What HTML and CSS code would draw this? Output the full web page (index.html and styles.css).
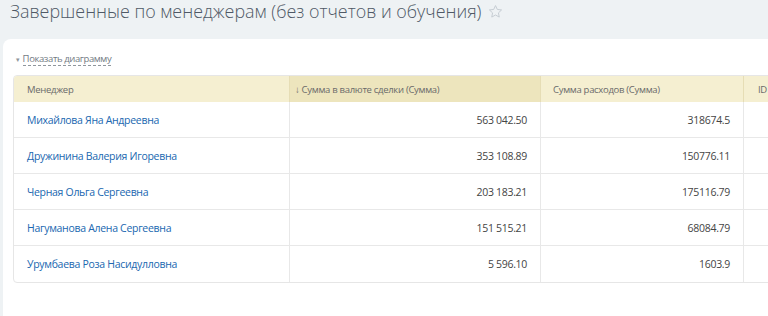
FILE: index.html
```html
<!DOCTYPE html>
<html lang="ru">
<head>
<meta charset="utf-8">
<link rel="stylesheet" href="styles.css">
</head>
<body>
<div class="page">
  <div class="title-row">
    <h1 class="title">Завершенные по менеджерам (без отчетов и обучения)</h1>
    <svg class="star" width="15" height="15" viewBox="0 0 24 24"><path d="M12 2.5l2.9 6.2 6.8.8-5 4.7 1.3 6.7L12 17.6 6 20.9l1.3-6.7-5-4.7 6.8-.8z" fill="none" stroke="#c6cdd3" stroke-width="1.6" stroke-linejoin="round"/></svg>
  </div>
  <div class="card">
    <div class="toggle"><span class="caret">▾</span><span class="toggle-link">Показать диаграмму</span></div>
    <div class="table">
      <div class="row head">
        <div class="cell c1">Менеджер</div>
        <div class="cell c2 sorted">↓ Сумма в валюте сделки (Сумма)</div>
        <div class="cell c3">Сумма расходов (Сумма)</div>
        <div class="cell c4">ID</div>
      </div>
      <div class="row">
        <div class="cell c1"><a class="name">Михайлова Яна Андреевна</a></div>
        <div class="cell c2 num">563 042.50</div>
        <div class="cell c3 num">318674.5</div>
        <div class="cell c4"></div>
      </div>
      <div class="row">
        <div class="cell c1"><a class="name">Дружинина Валерия Игоревна</a></div>
        <div class="cell c2 num">353 108.89</div>
        <div class="cell c3 num">150776.11</div>
        <div class="cell c4"></div>
      </div>
      <div class="row">
        <div class="cell c1"><a class="name">Черная Ольга Сергеевна</a></div>
        <div class="cell c2 num">203 183.21</div>
        <div class="cell c3 num">175116.79</div>
        <div class="cell c4"></div>
      </div>
      <div class="row">
        <div class="cell c1"><a class="name">Нагуманова Алена Сергеевна</a></div>
        <div class="cell c2 num">151 515.21</div>
        <div class="cell c3 num">68084.79</div>
        <div class="cell c4"></div>
      </div>
      <div class="row last">
        <div class="cell c1"><a class="name">Урумбаева Роза Насидулловна</a></div>
        <div class="cell c2 num">5 596.10</div>
        <div class="cell c3 num">1603.9</div>
        <div class="cell c4"></div>
      </div>
    </div>
  </div>
</div>
</body>
</html>
```

FILE: styles.css
```css
html, body {
  margin: 0;
  padding: 0;
  background: #eef2f4;
  overflow: hidden;
  width: 768px;
  height: 316px;
}
.page {
  font-family: "Open Sans", "Liberation Sans", sans-serif;
  color: #333;
  height: 316px;
  overflow: hidden;
}
.title-row {
  display: flex;
  align-items: center;
  height: 26px;
  padding: 0 0 0 10px;
  margin-top: -2px;
}
.title {
  margin: 0;
  font-size: 17.9px;
  font-weight: 300;
  color: #4f5966;
  white-space: nowrap;
}
.star {
  margin-left: 7px;
  margin-top: 1px;
}
.card {
  margin: 15px 0 0 3px;
  background: #fff;
  border-radius: 8px 0 0 8px;
  width: 800px;
  height: 300px;
  padding: 13px 0 0 10px;
  box-sizing: border-box;
}
.toggle {
  display: flex;
  align-items: center;
  height: 14px;
  font-size: 9.5px;
  letter-spacing: -0.4px;
  color: #737b83;
  padding-left: 3px;
}
.caret {
  font-size: 7px;
  margin-right: 3px;
  color: #8f969c;
}
.toggle-link {
  border-bottom: 1px dashed #8f969c;
  line-height: 12px;
}
.table {
  margin-top: 9px;
  border: 1px solid #e6e6e6;
  border-radius: 4px 0 0 4px;
  width: 790px;
  overflow: hidden;
}
.row {
  display: grid;
  grid-template-columns: 276px 251px 203px 60px;
  height: 35px;
  border-bottom: 1px solid #e8e8e8;
}
.row.last {
  border-bottom: none;
  height: 36px;
}
.row.head {
  height: 26px;
  background: #f5efd1;
  border-bottom: none;
  color: #6a6a6a;
}
.cell {
  display: flex;
  align-items: center;
  padding: 0 13px;
  border-right: 1px solid #e8e8e8;
  font-size: 10.5px;
  letter-spacing: -0.3px;
  white-space: nowrap;
}
.head .cell {
  font-size: 9.5px;
  letter-spacing: -0.3px;
  border-right: 1px solid #e6ddb5;
  padding-top: 1px;
}
.head .cell.sorted {
  background: #ede5bd;
  padding-left: 5px;
}
.head .c3 {
  padding-left: 12px;
}
.c4 {
  border-right: none;
}
.head .c4 {
  padding-left: 14px;
}
.num {
  justify-content: flex-end;
  color: #444;
}
.name {
  color: #2067b0;
  text-decoration: none;
}
```
